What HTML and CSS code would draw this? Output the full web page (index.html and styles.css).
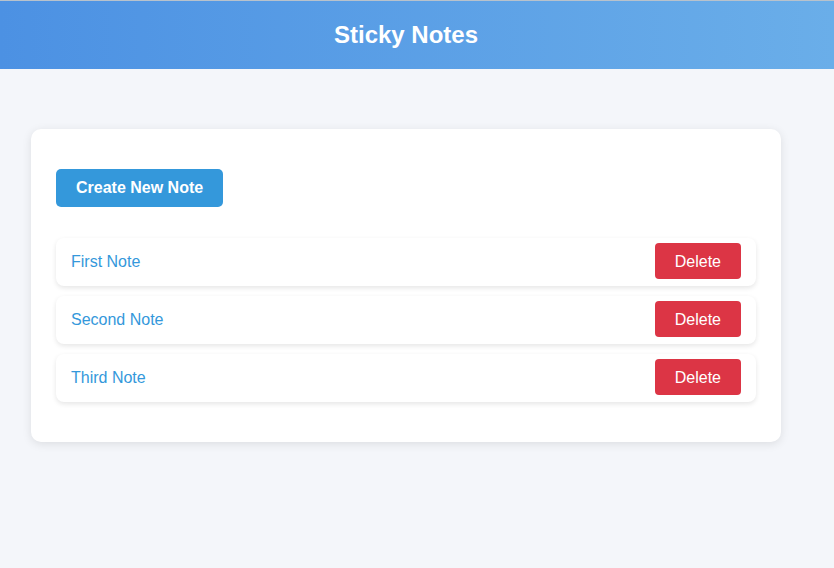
FILE: index.html
```html
<!DOCTYPE html>
<html lang="en">
<head>
<meta charset="utf-8">
<title>Sticky Notes</title>
<link rel="stylesheet" href="styles.css">
</head>
<body>
<header class="app-header">
  <h1 class="app-title">Sticky Notes</h1>
</header>
<main class="page">
  <section class="card">
    <button class="btn-create">Create New Note</button>
    <ul class="note-list">
      <li class="note"><span class="note-title">First Note</span><button class="btn-delete">Delete</button></li>
      <li class="note"><span class="note-title">Second Note</span><button class="btn-delete">Delete</button></li>
      <li class="note"><span class="note-title">Third Note</span><button class="btn-delete">Delete</button></li>
    </ul>
  </section>
</main>
</body>
</html>
```

FILE: styles.css
```css
* { box-sizing: border-box; }
html, body { margin: 0; padding: 0; }
body {
  background: #f4f6fa;
  font-family: "Liberation Sans", Arial, sans-serif;
  width: 834px;
  min-height: 568px;
}
.app-header {
  height: 69px;
  border-top: 1px solid #b8c2cc;
  background: linear-gradient(90deg, #4c91e3 0%, #6aaee9 100%);
  display: flex;
  align-items: center;
  justify-content: center;
  padding-right: 22px;
}
.app-title {
  margin: 0;
  color: #fff;
  font-size: 24px;
  font-weight: bold;
  line-height: 28px;
}
.page {
  width: 812px;
  padding-top: 60px;
  display: flex;
  justify-content: center;
}
.card {
  width: 750px;
  background: #fff;
  border-radius: 10px;
  box-shadow: 0 2px 10px rgba(0,0,0,0.1);
  padding: 40px 25px 40px;
}
.btn-create {
  display: block;
  border: none;
  background: #3498db;
  color: #fff;
  font-family: inherit;
  font-size: 16px;
  font-weight: bold;
  line-height: 18px;
  padding: 10px 20px;
  border-radius: 5px;
}
.note-list {
  list-style: none;
  margin: 31px 0 0;
  padding: 0;
  display: flex;
  flex-direction: column;
  gap: 10px;
}
.note {
  display: flex;
  align-items: flex-start;
  justify-content: space-between;
  padding: 5px 15px 7px;
  background: #fff;
  border-radius: 8px;
  box-shadow: 0 2px 5px rgba(0,0,0,0.1);
}
.note-title {
  color: #3498db;
  font-size: 16px;
  line-height: 18px;
  padding-top: 10px;
}
.btn-delete {
  border: none;
  background: #dc3545;
  color: #fff;
  font-family: inherit;
  font-size: 16px;
  line-height: 16px;
  padding: 11px 20px 9px;
  border-radius: 4px;
}
```
